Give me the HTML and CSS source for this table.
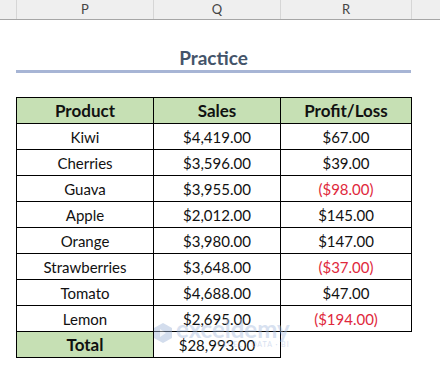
FILE: index.html
```html
<!DOCTYPE html>
<html lang="en">
<head>
	<meta charset="UTF-8">
	<title>Practice</title>
	<link rel="stylesheet" href="styles.css">
</head>
<body>
<div class='colhead'>
	<div class='corner'></div>
	<div class='col p'>P</div>
	<div class='col q'>Q</div>
	<div class='col r'>R</div>
	<div class='col rest'></div>
</div>
<div class='sheet'>
	<h2 class='title'>Practice</h2>
	<div class='rule'></div>
	<table class='grid'>
		<tr class='head'><th>Product</th><th>Sales</th><th>Profit/Loss</th></tr>
		<tr><td>Kiwi</td><td>$4,419.00</td><td>$67.00</td></tr>
		<tr><td>Cherries</td><td>$3,596.00</td><td>$39.00</td></tr>
		<tr><td>Guava</td><td>$3,955.00</td><td class='neg'>($98.00)</td></tr>
		<tr><td>Apple</td><td>$2,012.00</td><td>$145.00</td></tr>
		<tr><td>Orange</td><td>$3,980.00</td><td>$147.00</td></tr>
		<tr><td>Strawberries</td><td>$3,648.00</td><td class='neg'>($37.00)</td></tr>
		<tr><td>Tomato</td><td>$4,688.00</td><td>$47.00</td></tr>
		<tr><td>Lemon</td><td>$2,695.00</td><td class='neg'>($194.00)</td></tr>
		<tr class='total'><th>Total</th><td>$28,993.00</td><td class='blank'></td></tr>
	</table>
	<div class='mark'>
		<svg width="22" height="22" viewBox="0 0 22 22"><path d="M11 1 L20 6 L20 16 L11 21 L2 16 L2 6 Z" fill="#9fb4d8"/><path d="M8 7 L14 11 L8 15 Z" fill="#e4eaf4"/></svg>
		<div class='mark-text'>
			<span class='mark-name'>exceldemy</span>
			<span class='mark-sub'>EXCEL · DATA · BI</span>
		</div>
	</div>
</div>
</body>
</html>
```

FILE: styles.css
```css
body{
	margin:0;
	background:#fff;
	font-family: Lato, 'Liberation Sans', sans-serif;
}
.colhead{
	display:flex;
	height:19px;
	background:#efefef;
	border-bottom:1px solid #a6a6a6;
}
.corner{
	width:16px;
	border-right:1px solid #d6d6d6;
}
.col{
	font-size:13px;
	color:#444;
	text-align:center;
	line-height:19px;
	border-right:1px solid #d6d6d6;
}
.p{ width:136px; }
.q{ width:126px; }
.r{ width:130px; }
.rest{ flex:1; border-right:none; }

.sheet{
	position:relative;
	padding-left:16px;
}
.title{
	margin:0;
	width:395px;
	padding-top:27px;
	height:22px;
	line-height:22px;
	text-align:center;
	font-size:19px;
	font-weight:bold;
	color:#44546a;
}
.rule{
	width:395px;
	height:3px;
	margin-top:1px;
	background:#a7b5d5;
}
.grid{
	margin-top:24px;
	border-collapse:collapse;
	font-size:15px;
}
.grid th,.grid td{
	border:1px solid #000;
	height:25px;
	padding:0;
	text-align:center;
	color:#111;
}
.grid th{
	font-size:17px;
	background:#c6e0b4;
}
.grid tr th:nth-child(1),.grid tr td:nth-child(1){ width:136px; }
.grid tr th:nth-child(2),.grid tr td:nth-child(2){ width:126px; }
.grid tr th:nth-child(3),.grid tr td:nth-child(3){ width:130px; }
.grid .neg{
	color:#e0283c;
}
.grid .blank{
	border-right:none;
	border-bottom:none;
}
.mark{
	position:absolute;
	left:152px;
	top:297px;
	display:flex;
	align-items:center;
	gap:2px;
	opacity:.45;
}
.mark-text{
	display:flex;
	flex-direction:column;
	line-height:1;
}
.mark-name{
	font-size:24px;
	font-weight:bold;
	color:#a9bddf;
}
.mark-sub{
	font-size:7px;
	color:#a9bddf;
	text-align:right;
	letter-spacing:1px;
}
```
